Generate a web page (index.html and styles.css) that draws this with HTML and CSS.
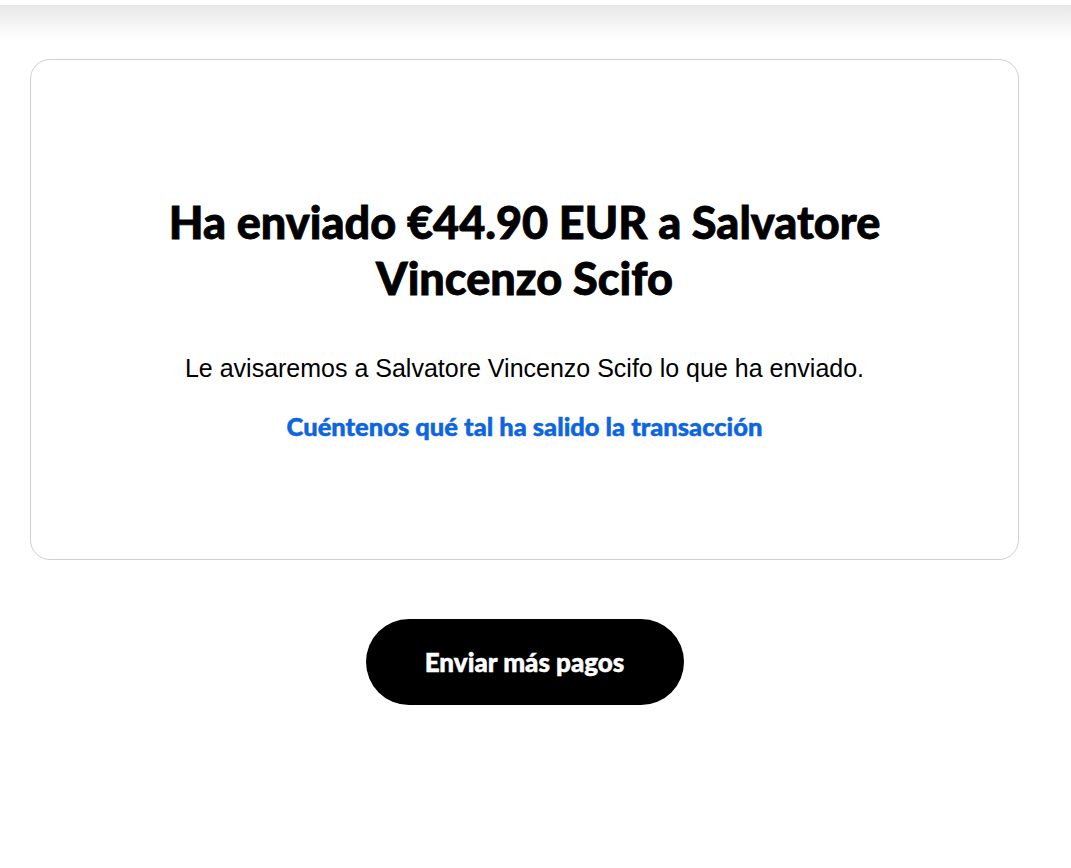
FILE: index.html
```html
<!DOCTYPE html>
<html lang="es">
<head>
    <meta charset="UTF-8">
    <meta name="viewport" content="width=device-width, initial-scale=1.0">
    <title>Pago enviado</title>
    <link rel="stylesheet" href="styles.css">
</head>
<body>
    <div class="top-shadow"></div>
    <main class="page">
        <section class="card">
            <h1>Ha enviado €44.90 EUR a Salvatore Vincenzo Scifo</h1>
            <p class="note">Le avisaremos a Salvatore Vincenzo Scifo lo que ha enviado.</p>
            <a class="feedback" href="#">Cuéntenos qué tal ha salido la transacción</a>
        </section>
        <div class="actions">
            <button type="button" class="btn-primary">Enviar más pagos</button>
        </div>
    </main>
</body>
</html>
```

FILE: styles.css
```css
body {
    margin: 0;
    background-color: #fff;
    font-family: "Liberation Sans", Arial, sans-serif;
    color: #000;
}
.top-shadow {
    height: 40px;
    background: linear-gradient(#fff 0, #fff 5px, #e8e8e8 5px, #fff 40px);
}
.page {
    padding: 19px 52px 0 30px;
}
.card {
    border: 1px solid #cfcfcf;
    border-radius: 20px;
    padding: 134px 20px 117px;
    text-align: center;
}
h1 {
    font-family: Lato, sans-serif;
    font-weight: 900;
    font-size: 45px;
    line-height: 56px;
    max-width: 760px;
    margin: 0 auto 46px;
    -webkit-text-stroke: 0.8px #000;
}
.note {
    font-size: 25px;
    line-height: 32px;
    margin: 0 0 26px;
}
.feedback {
    display: inline-block;
    font-family: Lato, sans-serif;
    font-weight: 900;
    font-size: 25.5px;
    line-height: 32px;
    color: #0d65e0;
    text-decoration: none;
    -webkit-text-stroke: 0.5px #0d65e0;
}
.actions {
    display: flex;
    justify-content: center;
    padding-top: 59px;
}
.btn-primary {
    width: 318px;
    height: 86px;
    border: none;
    border-radius: 43px;
    background-color: #000;
    color: #fff;
    font-family: Lato, sans-serif;
    font-weight: 900;
    font-size: 26px;
    -webkit-text-stroke: 0.5px #fff;
    cursor: pointer;
}
```
